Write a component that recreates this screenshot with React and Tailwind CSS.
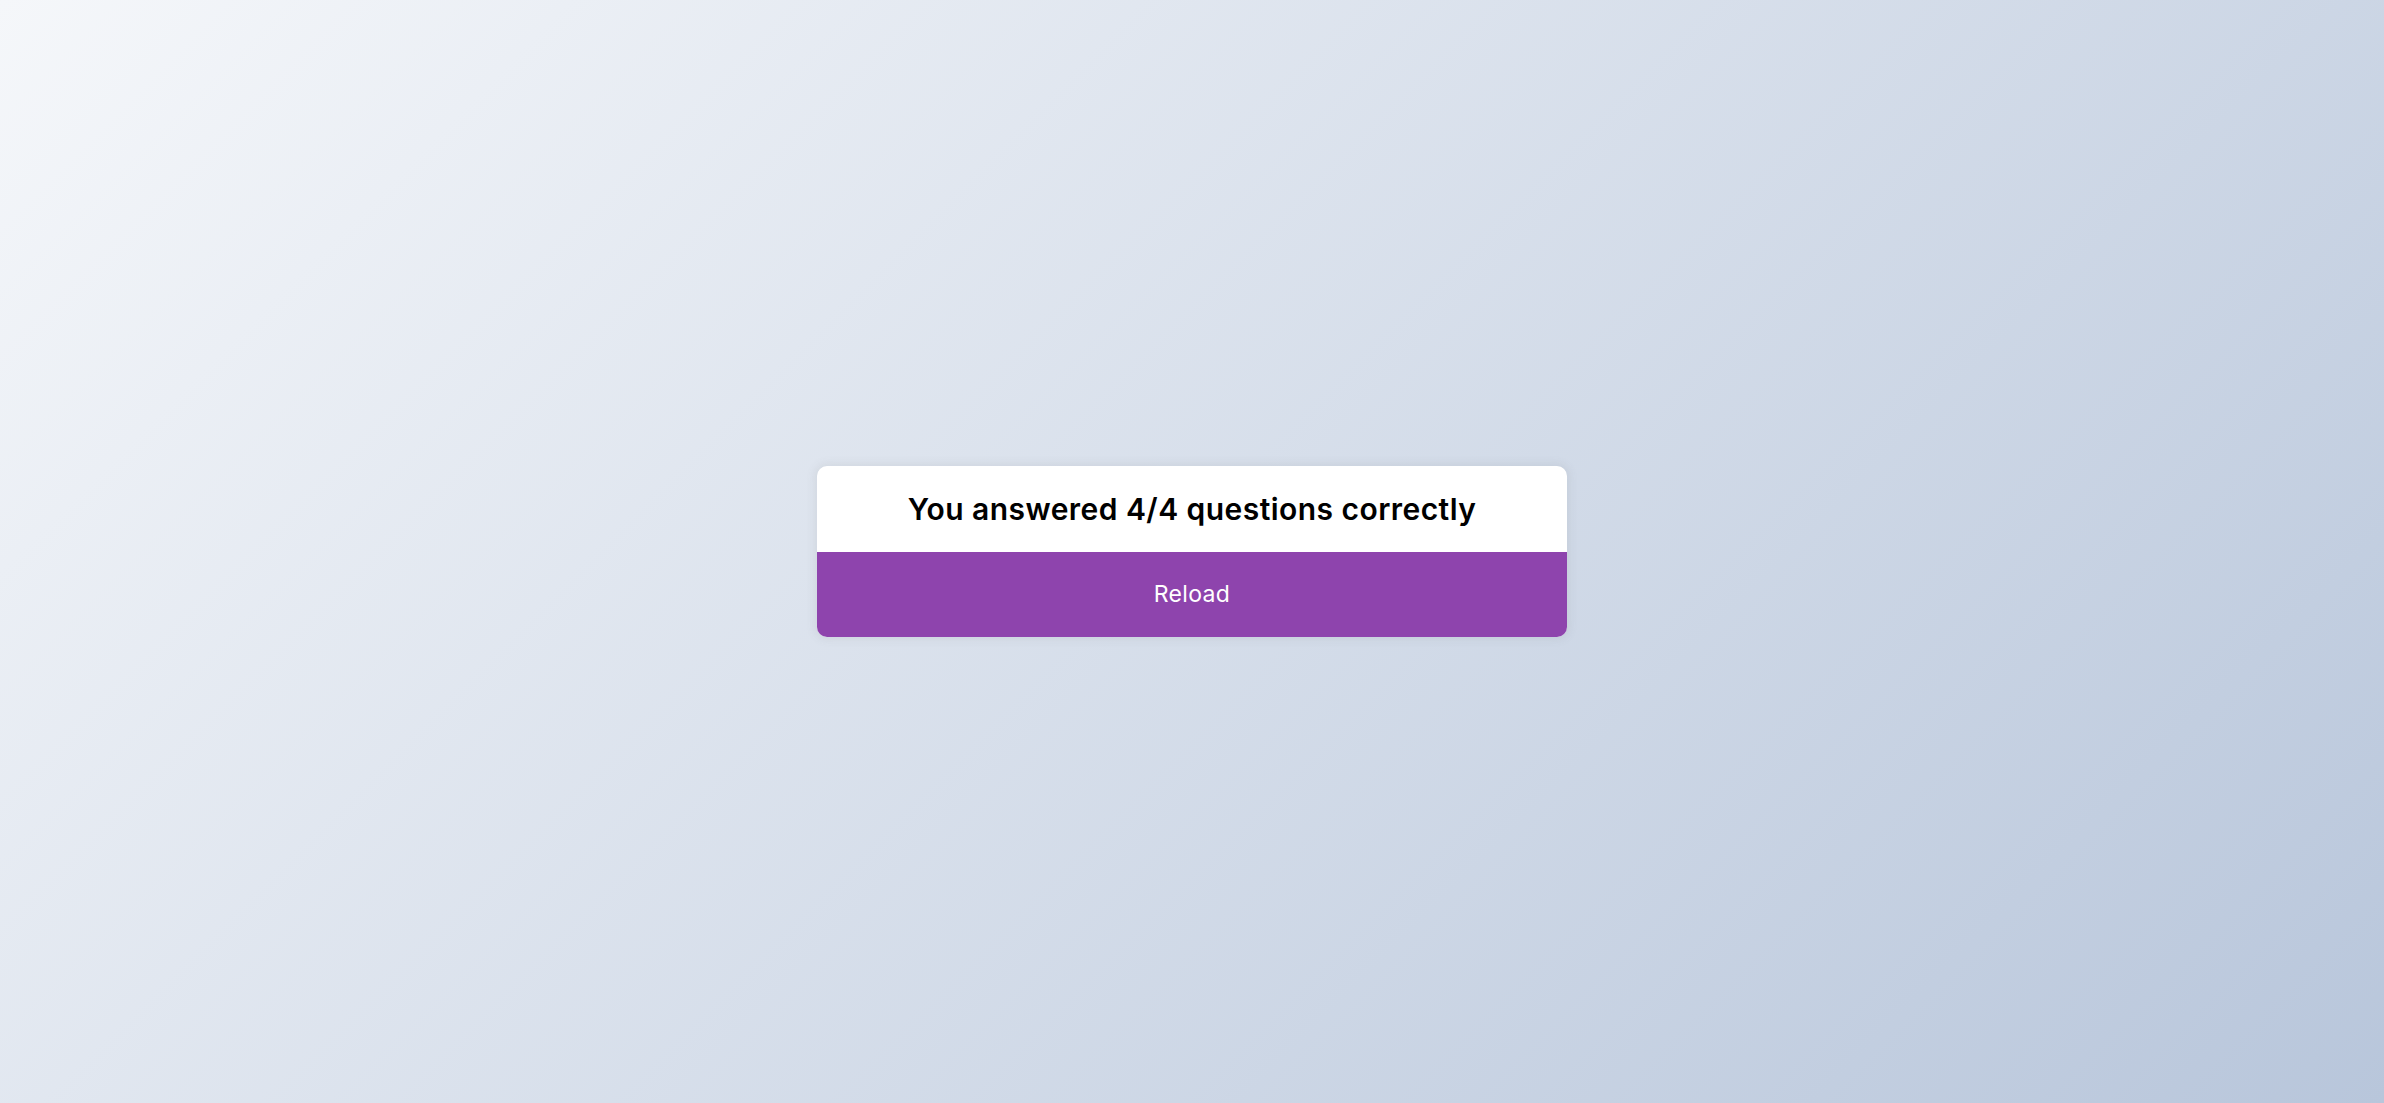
export default function App() {
  return (
    <div className="min-h-screen w-full flex items-center justify-center bg-[#b8c6db] bg-[linear-gradient(315deg,#b8c6db_0%,#f5f7fa_100%)] font-['Inter','Noto_Sans',sans-serif]">
      <div className="w-[750px] bg-white rounded-[10px] overflow-hidden shadow-[0_0_10px_2px_rgba(100,100,100,0.1)]">
        <h2 className="h-[86px] flex items-center justify-center text-[30px] font-semibold text-black tracking-[0.45px]">
          You answered 4/4 questions correctly
        </h2>
        <button className="block w-full h-[85px] bg-[#8e44ad] text-white text-[23px] tracking-[0.3px] cursor-pointer">
          Reload
        </button>
      </div>
    </div>
  );
}
